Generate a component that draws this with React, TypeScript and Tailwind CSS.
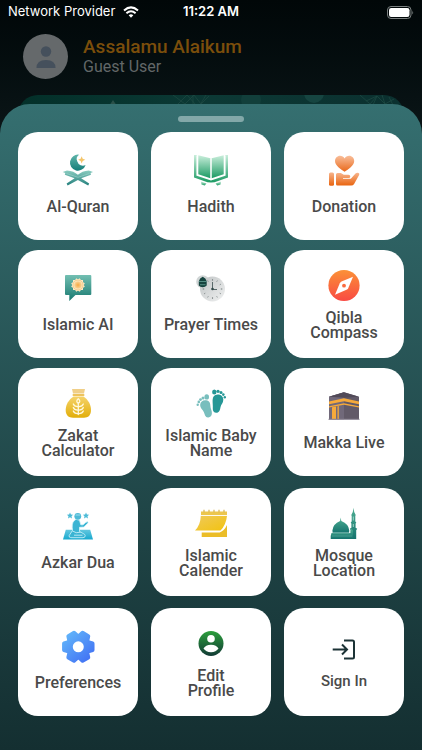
import React from 'react';

interface MenuItem {
  label: string;
  icon: React.ReactNode;
  small?: boolean;
}

interface GradientProps {
  id: string;
  from: string;
  to: string;
  diagonal?: boolean;
}

const Gradient: React.FC<GradientProps> = ({ id, from, to, diagonal }) => (
  <linearGradient id={id} x1="0" y1="0" x2={diagonal ? '1' : '0'} y2="1">
    <stop offset="0" stopColor={from} />
    <stop offset="1" stopColor={to} />
  </linearGradient>
);

const Icon: React.FC<{ children: React.ReactNode }> = ({ children }) => (
  <svg viewBox="-2 0 36 32" className="w-9 h-8 shrink-0 overflow-visible" aria-hidden="true">
    {children}
  </svg>
);

const QuranIcon = () => (
  <Icon>
    <defs>
      <Gradient id="moon" from="#5fb5aa" to="#157d79" />
      <Gradient id="stand" from="#8accc0" to="#237f7c" />
    </defs>
    <path d="M17 .7A8 8 0 1 0 23.600 11 5.800 5.800 0 0 1 15.300 7.500 5.500 5.500 0 0 1 17 .7Z" fill="url(#moon)" />
    <path d="M19.700 2.300l1 2.400 2.600 1.100-2.600 1.200-1 2.600-1.100-2.600-2.500-1.200 2.500-1.100Z" fill="#f4c56b" />
    <path
      d="M.7 18 5 16.500q7 .6 10.900 4.300 4-3.700 10.900-4.300l4.200 1.500-2.500 1 .5 1.700-9.800 3.500 8 5.300-1 2-10.300-5.600-10.300 5.600-1-2 8-5.300-9.800-3.500.5-1.700Z"
      fill="url(#stand)"
    />
    <path d="M4.500 19.500 16 23.300l11.400-3.800" fill="none" stroke="#a9dbd2" strokeWidth=".5" />
  </Icon>
);

const HadithIcon = () => (
  <Icon>
    <defs>
      <Gradient id="hadith" from="#c9eedb" to="#1b9a63" />
    </defs>
    <g fill="url(#hadith)">
      <path d="M3.300 1.300 15.400 4.300v20L3.300 20.300Z" />
      <path d="M28.700 1.300 16.600 4.300v20l12.100-4Z" />
      <path d="M-1 1h2.800v20.800L16 26.500l14.200-4.700V1H33v22.500l-13.500 4.700-3.500.3-3.500-.3L-1 23.500Z" />
      <path d="M6 27.500l5.500 2-1.800 2-3.200-1ZM26 27.500l-5.500 2 1.800 2 3.200-1Z" />
    </g>
    <path d="M1.900 1.500v20.200M30.100 1.500v20.200M16 4.500v20" stroke="#fff" strokeWidth=".8" />
  </Icon>
);

const DonationIcon = () => (
  <Icon>
    <defs>
      <Gradient id="heart" from="#f9be9a" to="#e9691b" />
      <Gradient id="hand" from="#f7b48c" to="#e9640f" />
    </defs>
    <path
      d="M16.600 17.700C13 15.200 7 11.700 7 7 7 4 9.300 1.700 12 1.700c2 0 3.700 1 4.600 2.800.9-1.800 2.600-2.800 4.600-2.800 2.800 0 5 2.300 5 5.300 0 4.700-6 8.200-9.600 10.700Z"
      fill="url(#heart)"
    />
    <rect x="1" y="18.500" width="5" height="13.200" rx="1.500" fill="url(#hand)" />
    <path
      d="M8 20.500q0-1.500 1.500-1.500h3.300l3 1.700h4.700q1.800.2 1.800 1.800 0 1.500-1.800 1.500h-5.500v.8h7.800l4.700-5.200q1.300-1.100 3.100-.6 1.200.6.500 2l-5 9q-1 1.600-3 1.600H9.500Q8 31.600 8 30Z"
      fill="url(#hand)"
    />
  </Icon>
);

const AiIcon = () => (
  <Icon>
    <defs>
      <Gradient id="bubble" from="#73bfb2" to="#17786f" />
      <radialGradient id="flower">
        <stop offset="0" stopColor="#f7a944" />
        <stop offset="1" stopColor="#f9d59a" />
      </radialGradient>
    </defs>
    <path d="M4 3h24.300q1 0 1 1v18q0 1-1 1H13.500L7.300 29v-6H4q-1 0-1-1V4q0-1 1-1Z" fill="url(#bubble)" />
    <g fill="#fbe9c6">
      <rect x="11" y="8" width="10" height="10" />
      <rect x="11" y="8" width="10" height="10" transform="rotate(30 16 13)" />
      <rect x="11" y="8" width="10" height="10" transform="rotate(60 16 13)" />
    </g>
    <circle cx="16" cy="13" r="5" fill="none" stroke="#efb35f" strokeWidth=".6" />
    <circle cx="16" cy="13" r="3.800" fill="url(#flower)" />
  </Icon>
);

const PrayerIcon = () => (
  <Icon>
    <defs>
      <Gradient id="clock" from="#c0c4c5" to="#f0f1f1" diagonal />
    </defs>
    <circle cx="7.700" cy="9.700" r="6.500" fill="#d0d5d5" />
    <circle cx="17.500" cy="17" r="12.500" fill="url(#clock)" />
    {Array.from({ length: 12 }, (_, i) => (
      <path
        key={i}
        d="M17.500 7.200v1.500"
        stroke="#7d8586"
        strokeWidth={i % 3 ? '.7' : '1.100'}
        transform={`rotate(${i * 30} 17.500 17)`}
      />
    ))}
    <path d="M17.500 10v7.500H22" fill="none" stroke="#59696a" strokeWidth="1" />
    <circle cx="17.500" cy="17" r="1.300" fill="#32494a" />
    <path d="M3.800 13.500V9.200q.8-3.200 3.900-4.500 3.200 1.300 4 4.500v4.300q-1.500 1.700-4 1.700t-3.900-1.700Z" fill="#16443f" />
    <path d="M4 9.500h7.500M5 12.700h5.500" stroke="#6eada0" strokeWidth=".7" />
  </Icon>
);

const CompassIcon = () => (
  <Icon>
    <defs>
      <Gradient id="compass" from="#fb9137" to="#f94a43" />
    </defs>
    <circle cx="16" cy="16.500" r="15.600" fill="url(#compass)" />
    <path d="M25 7.700 20.200 19.200Q19.500 20.300 18.500 20.800L7 25.800 11.800 14.200Q12.400 13 13.500 12.500Z" fill="#fff" />
    <circle cx="16" cy="16.700" r="1.900" fill="#f96b3e" />
  </Icon>
);

const ZakatIcon = () => (
  <Icon>
    <defs>
      <Gradient id="bag" from="#f5d36b" to="#e2ae09" />
    </defs>
    <path d="M10 2h13l-1 4.500H11Z" fill="#f0cf88" />
    <rect x="10.500" y="7" width="12" height="2" rx="1" fill="#eec35c" />
    <path
      d="M11.500 9.500h10C26 12.500 29 17.500 29 23c0 5.500-3 7.700-7 7.700H11c-4.300 0-7.300-2.200-7.300-7.700 0-5.500 3.300-10.500 7.800-13.500Z"
      fill="url(#bag)"
    />
    <g fill="none" stroke="#fff8dd" strokeWidth="1.300" strokeLinecap="round">
      <path d="M16.300 16v11.500" />
      <path d="M16.300 19.500q-4 .3-5-2.500M16.300 19.500q4 .3 5-2.500M16.300 23q-4 .3-5-2.500M16.300 23q4 .3 5-2.500M16.300 26.500q-4 .3-5-2.500M16.300 26.500q4 .3 5-2.500" />
      <path d="M16.300 11.800q-3 2.700 0 4.500 3-1.800 0-4.500Z" />
    </g>
  </Icon>
);

const BabyIcon = () => (
  <Icon>
    <g fill="#78bebd">
      <path d="M5.200 17.500c.3-3 3-4.800 6-4.200 3.300.6 4.200 2.800 4.200 5.800 0 2.700 1.600 4.200 1.500 7.200-.1 2.600-1.600 4.300-3.900 4.100-2.900-.2-3-2.800-4.100-5.200-1.200-2.700-4-4.200-3.700-7.700Z" />
      <ellipse cx="11.700" cy="9.900" rx="2.300" ry="2.700" />
      <circle cx="8" cy="10.900" r="1.500" />
      <circle cx="5.500" cy="12.600" r="1.400" />
      <circle cx="3.800" cy="14.900" r="1.300" />
      <circle cx="2.700" cy="17.700" r="1.200" />
    </g>
    <g fill="#269796">
      <path d="M17.600 13c.1-3.200 1.800-5.300 5-5.500 3.300-.2 5.700 2 5.700 5.200 0 3.300-2.300 4.700-2.800 7.500-.5 2.900-1.200 5.500-4.200 5.500-2.400 0-3.700-1.800-3.500-4.300.2-3.200-.3-4.900-.2-8.400Z" />
      <ellipse cx="19.300" cy="5" rx="2.200" ry="2.500" />
      <circle cx="23" cy="4.300" r="1.600" />
      <circle cx="26" cy="5.400" r="1.500" />
      <circle cx="28.300" cy="7.600" r="1.300" />
      <circle cx="29.800" cy="10.200" r="1.200" />
    </g>
  </Icon>
);

const MakkaIcon = () => (
  <Icon>
    <path d="M1 6.700 16 2.300l15 4.400v22.600H1Z" fill="#625a68" />
    <path d="M1 6.700 16 2.300v27H1Z" fill="#71697a" />
    <path d="M1 6.700 16 2.300l15 4.400-15 1Z" fill="#514a58" />
    <path d="M1 11.500 16 8.300l15 3.200v2.700l-15-2.900-15 2.900Z" fill="#f6aa3a" />
    <path d="M1 16.300 16 13.300l15 3v1.200l-15-2.800-15 2.800Z" fill="#f6aa3a" />
    <path d="M4 17.200 8 16.500v12.800H4ZM9.500 16.200l1.300-.2v13.300H9.500Z" fill="#f6aa3a" />
    <path d="M.5 29.300h31" stroke="#8a8391" />
  </Icon>
);

const AzkarIcon = () => (
  <Icon>
    <defs>
      <Gradient id="azkar" from="#63c7df" to="#18a9cf" />
    </defs>
    <path d="M3.800 19.800h24.400L31 29.500H1Z" fill="url(#azkar)" />
    <path
      d="m8 2.500.9 2 2.200.2-1.600 1.500.5 2.200L8 7.300 6 8.400l.5-2.200L4.900 4.700l2.200-.2ZM24 2.500l.9 2 2.200.2-1.600 1.500.5 2.200-2-1.100-2 1.100.5-2.200-1.600-1.500 2.200-.2Z"
      fill="#4dbbd7"
    />
    <path
      d="M14 9.300c-3 1.500-4 4.500-3.800 8l.3 3.200-3.300 5q-.5 2 1.600 2.200H21q2.300-.1 2.200-2-.1-1.500-2-2.200l-3.700-2v-4.200l4.300-.2 3.700-3.500q1.200-1.500 0-2l-1.800.8-2.700 2.400h-2.200l-1.300-4.500Z"
      fill="#3bb4d3"
      stroke="#d5f5fb"
      strokeWidth=".8"
    />
    <circle cx="15.800" cy="6.300" r="3.400" fill="#4dbbd7" />
    <path d="M13.500 5h4.800" stroke="#d5f5fb" strokeWidth=".6" />
    <path d="M10.500 21q3.500 2.800 8 1.200M12 25.200h8.500" fill="none" stroke="#d5f5fb" strokeWidth=".8" />
  </Icon>
);

const CalendarIcon = () => (
  <Icon>
    <defs>
      <Gradient id="calendar" from="#efc95a" to="#f2c30f" diagonal />
    </defs>
    <rect x="6" y="4.500" width="26" height="3.600" fill="#ecc64e" />
    <path d="M9 2.800v2.500M14 2.800v2.500M19 2.800v2.500M24 2.800v2.500M29 2.800v2.500" stroke="#d9b54d" strokeWidth="1.200" />
    <path d="M5.800 9H32q-1 9-6.500 14.500H0Q5.500 18 5.800 9Z" fill="url(#calendar)" />
    <path d="M32 18v12H6.700v-4.500h18Q29.500 23.500 32 18Z" fill="#ebbd28" />
  </Icon>
);

const MosqueIcon = () => (
  <Icon>
    <defs>
      <Gradient id="mosque" from="#4dae92" to="#15736e" />
    </defs>
    <g fill="url(#mosque)">
      <path d="M12.700 10.500l.6 3.500q7.500 3 8 9.500L21 26H4.700l-.3-2.500q.5-6.500 7.700-9.500Z" />
      <path d="M25.500.8 26.200 5l1.500 3-.4 1v5.500l1 .8-.7 1.500v4l1.600 1-1 1.500V32h-5.400v-8.700l-1-1.500 1.600-1v-4l-.7-1.500 1-.8V9l-.4-1 1.500-3Z" />
      <path d="M3.500 26h19v-2.500l1-2 1.500 2V32H2.700v-3Z" />
    </g>
    <path d="M4.300 25.800h17.500" stroke="#c5e9df" strokeWidth=".6" />
    <path d="M4.500 29h20" stroke="#76bcae" strokeWidth=".8" strokeDasharray="1 1" />
    <path d="M25.300 9.500v4M25.300 17v3" stroke="#b9e2d7" strokeWidth=".8" />
  </Icon>
);

const point = (radius: number, degrees: number) => {
  const angle = (degrees * Math.PI) / 180;
  return `${(16.3 + radius * Math.cos(angle)).toFixed(2)} ${(16.8 + radius * Math.sin(angle)).toFixed(2)}`;
};

const gearPath =
  'M' +
  [0, 60, 120, 180, 240, 300]
    .flatMap((a) => [point(11, a - 25), point(14.6, a - 13), point(14.6, a + 13), point(11, a + 25)])
    .join('L') +
  'Z';

const PreferencesIcon = () => (
  <Icon>
    <defs>
      <linearGradient id="gear" gradientUnits="userSpaceOnUse" x1="4" y1="3" x2="28" y2="30">
        <stop offset="0" stopColor="#62b6fa" />
        <stop offset="1" stopColor="#4272f4" />
      </linearGradient>
    </defs>
    <path d={gearPath} fill="url(#gear)" stroke="url(#gear)" strokeWidth="4" strokeLinejoin="round" />
    <circle cx="16.300" cy="16.800" r="5.500" fill="#fff" />
  </Icon>
);

const ProfileIcon = () => (
  <Icon>
    <defs>
      <Gradient id="profile" from="#2c9f3c" to="#123a35" />
    </defs>
    <circle cx="16" cy="16.500" r="12.500" fill="url(#profile)" />
    <circle cx="16" cy="11.800" r="3.800" fill="#fff" />
    <path d="M8.500 21.600Q10.500 17.800 16 17.800t7.500 3.800Q21 25.300 16 25.300t-7.500-3.700Z" fill="#fff" />
  </Icon>
);

const SignInIcon = () => (
  <Icon>
    <g fill="none" stroke="#1c3336" strokeWidth="2">
      <path d="M4.700 17.500h14M14 12.500l5 5-5 5" />
      <path d="M16 8.500h8.500q1.500 0 1.500 1.500v15q0 1.500-1.500 1.500H16" />
    </g>
  </Icon>
);

const MAIN_ITEMS: MenuItem[] = [
  { label: 'Al-Quran', icon: <QuranIcon /> },
  { label: 'Hadith', icon: <HadithIcon /> },
  { label: 'Donation', icon: <DonationIcon /> },
  { label: 'Islamic AI', icon: <AiIcon /> },
  { label: 'Prayer Times', icon: <PrayerIcon /> },
  { label: 'Qibla\nCompass', icon: <CompassIcon /> },
  { label: 'Zakat\nCalculator', icon: <ZakatIcon /> },
  { label: 'Islamic Baby\nName', icon: <BabyIcon /> },
  { label: 'Makka Live', icon: <MakkaIcon /> },
];

const MORE_ITEMS: MenuItem[] = [
  { label: 'Azkar Dua', icon: <AzkarIcon /> },
  { label: 'Islamic\nCalender', icon: <CalendarIcon /> },
  { label: 'Mosque\nLocation', icon: <MosqueIcon /> },
  { label: 'Preferences', icon: <PreferencesIcon /> },
  { label: 'Edit\nProfile', icon: <ProfileIcon /> },
  { label: 'Sign In', icon: <SignInIcon />, small: true },
];

const labelClass = (item: MenuItem) => {
  if (item.small) return 'text-[15px] leading-4 pb-1';
  return item.label.includes('\n') ? 'text-[16px] leading-[15px] whitespace-pre-line' : 'text-[16px] leading-6';
};

const MenuCard: React.FC<{ item: MenuItem }> = ({ item }) => (
  <button
    type="button"
    className="min-h-[108px] rounded-[20px] bg-white flex flex-col items-center justify-center gap-[9px] font-medium text-[#4a4a4a]"
  >
    {item.icon}
    <span className={labelClass(item)}>{item.label}</span>
  </button>
);

const StatusBar = () => (
  <div className="grid grid-cols-[1fr_auto_1fr] items-center h-6 pl-2 pr-2 text-[13px] text-white font-['Inter',sans-serif]">
    <div className="flex items-center gap-2 whitespace-nowrap">
      <span>Network Provider</span>
      <svg viewBox="0 0 16 12" className="w-4 h-3" aria-hidden="true">
        <path d="M8 11.800 5.700 9.300q2.300-1.900 4.600 0Z" fill="#fff" />
        <path d="M1 4.500q7-6.200 14 0M3.400 7.200q4.600-4 9.200 0" fill="none" stroke="#fff" strokeWidth="2" />
      </svg>
    </div>
    <span className="font-semibold">11:22 AM</span>
    <svg viewBox="0 0 27 13" className="w-[27px] h-[13px] justify-self-end" aria-hidden="true">
      <rect x=".5" y=".5" width="23.500" height="12" rx="3.500" fill="none" stroke="#7b8080" />
      <rect x="2" y="2" width="20.500" height="9" rx="2.200" fill="#fff" />
      <path d="M25.300 4.500q1.500 2 0 4Z" fill="#7b8080" />
    </svg>
  </div>
);

export default function App() {
  return (
    <div className="min-h-screen flex flex-col bg-linear-to-b from-[#010708] to-[#0b1517] to-[130px] font-['Roboto',sans-serif]">
      <StatusBar />

      <header className="flex items-center gap-[15px] px-[23px] pt-2.5 pb-4">
        <div className="w-[45px] h-[45px] rounded-full bg-[#65696b] flex items-center justify-center">
          <svg viewBox="0 0 20 22" className="w-5 h-[22px]" aria-hidden="true">
            <circle cx="10" cy="5.500" r="5.200" fill="#45505c" />
            <path d="M.5 22q0-8 9.500-8t9.500 8Z" fill="#45505c" />
          </svg>
        </div>
        <div>
          <h1 className="text-[19px] leading-5 font-medium text-[#7b4e0b]">Assalamu Alaikum</h1>
          <p className="text-[16px] leading-5 text-[#626768]">Guest User</p>
        </div>
      </header>

      <div className="mx-[18px] h-10 rounded-t-[20px] overflow-hidden bg-linear-to-r from-[#033029] via-[#0c3935] to-[#0b302f]">
        <svg viewBox="0 0 386 40" className="w-full h-10" preserveAspectRatio="xMidYMin slice" aria-hidden="true">
          <circle cx="296" cy="-2" r="10" fill="#164541" />
          <circle cx="233" cy="5" r="10" fill="#123f3b" />
          <path d="m95 5 4 6h-8Z" fill="#2a5049" />
          <g fill="none" stroke="#1d4943" strokeWidth=".8">
            <path d="m155 0 12 9 9-9 7 9 8-8M160 9l9-9 9 10M175 0v9M188 0l-6 10" />
            <path d="m342 0 10 9 7-8 8 8 9-5M348 6l11-5M359 1l-4 9M367 9l-3-9M375 10l-4-8" />
          </g>
        </svg>
      </div>

      <main className="relative -mt-[31px] flex-1 rounded-t-[30px] bg-linear-to-b from-[#356f70] to-[#142f31] px-[18px] pt-3 pb-[34px] flex flex-col">
        <div className="mx-auto w-[66px] h-1.5 rounded-full bg-[#83a8a9]" />
        <nav className="mt-2.5 flex flex-col gap-3" aria-label="Features">
          <div className="grid grid-cols-3 gap-x-[13px] gap-y-2.5">
            {MAIN_ITEMS.map((item) => (
              <MenuCard key={item.label} item={item} />
            ))}
          </div>
          <div className="grid grid-cols-3 gap-x-[13px] gap-y-3">
            {MORE_ITEMS.map((item) => (
              <MenuCard key={item.label} item={item} />
            ))}
          </div>
        </nav>
      </main>
    </div>
  );
}
